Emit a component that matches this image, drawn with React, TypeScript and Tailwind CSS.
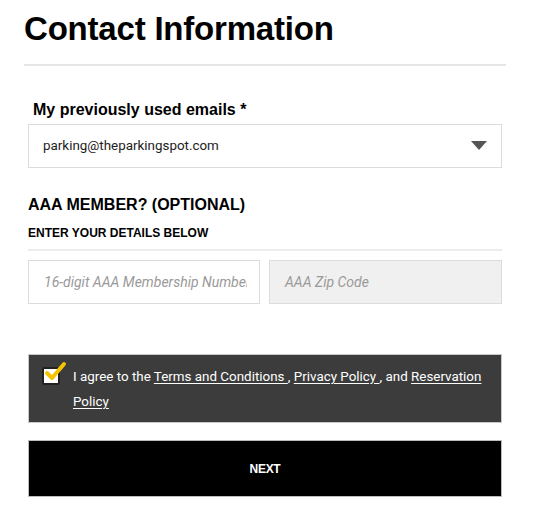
export default function App() {
  return (
    <div className="w-[536px] h-[526px] bg-white relative overflow-hidden">
      {/* TÍTULO */}
      <div className="pl-[24px] pr-[30px] pt-[9px]">
        <h1 className="text-[33px] leading-[40px] font-bold text-black font-['Liberation_Sans',Arial,sans-serif] tracking-[-0.2px]">
          Contact Information
        </h1>
        <div className="mt-[15px] h-[2px] bg-[#e5e5e5]" />
      </div>

      <div className="px-[28px] w-[530px] pt-[34px]">
        {/* EMAILS */}
        <label className="block pl-[5px] text-[16px] leading-[20px] font-bold text-black font-['Liberation_Sans',Arial,sans-serif]">
          My previously used emails *
        </label>
        <div className="mt-[4px] h-[44px] border border-[#dcdcdc] flex items-center justify-between pl-[14px] pr-[14px]">
          <span className="text-[13.4px] text-[#222] font-['Roboto',sans-serif]">parking@theparkingspot.com</span>
          <svg width="16" height="10" viewBox="0 0 16 10">
            <polygon points="0,0 16,0 8,9" fill="#555" />
          </svg>
        </div>

        {/* AAA */}
        <h2 className="mt-[27px] text-[16px] leading-[20px] font-bold text-black font-['Liberation_Sans',Arial,sans-serif]">
          AAA MEMBER? (OPTIONAL)
        </h2>
        <p className="mt-[10px] text-[12px] leading-[16px] font-bold text-black font-['Liberation_Sans',Arial,sans-serif]">
          ENTER YOUR DETAILS BELOW
        </p>
        <div className="mt-[8px] h-[2px] bg-[#ececec]" />

        <div className="mt-[9px] flex gap-[9px]">
          <div className="w-[232px] h-[44px] border border-[#dcdcdc] bg-white flex items-center pl-[15px]">
            <span className="text-[14px] italic text-[#9a9a9a] font-['Roboto',sans-serif] whitespace-nowrap overflow-hidden w-[203px]">
              16-digit AAA Membership Number
            </span>
          </div>
          <div className="flex-1 h-[44px] border border-[#dcdcdc] bg-[#f0f0f0] flex items-center pl-[15px]">
            <span className="text-[14px] italic text-[#9a9a9a] font-['Roboto',sans-serif]">AAA Zip Code</span>
          </div>
        </div>

        {/* TÉRMINOS */}
        <div className="mt-[50px] h-[69px] bg-[#3c3c3c] border border-[#c8c8c8] flex items-start pl-[13px] pt-[9px]">
          <div className="relative w-[18px] h-[18px] mt-[3px] shrink-0">
            <div className="absolute inset-0 bg-white border-2 border-[#222] rounded-[2px]" />
            <svg width="24" height="22" viewBox="0 0 24 22" className="absolute left-[1px] top-[-6px]">
              <path d="M4 12 L9 17 L21 3" stroke="#f5c400" strokeWidth="4" fill="none" strokeLinecap="round" strokeLinejoin="round" />
            </svg>
          </div>
          <p className="ml-[13px] w-[420px] text-[13.4px] leading-[25px] text-white font-['Roboto',sans-serif]">
            I agree to the <span className="underline underline-offset-2">Terms and Conditions </span>,{" "}
            <span className="underline underline-offset-2">Privacy Policy </span>, and{" "}
            <span className="underline underline-offset-2">Reservation Policy</span>
          </p>
        </div>

        {/* BOTÓN */}
        <button className="mt-[17px] w-full h-[57px] bg-black border border-[#bdbdbd] text-white text-[12px] font-bold font-['Liberation_Sans',Arial,sans-serif] tracking-[-0.3px]">
          NEXT
        </button>
      </div>
    </div>
  );
}
